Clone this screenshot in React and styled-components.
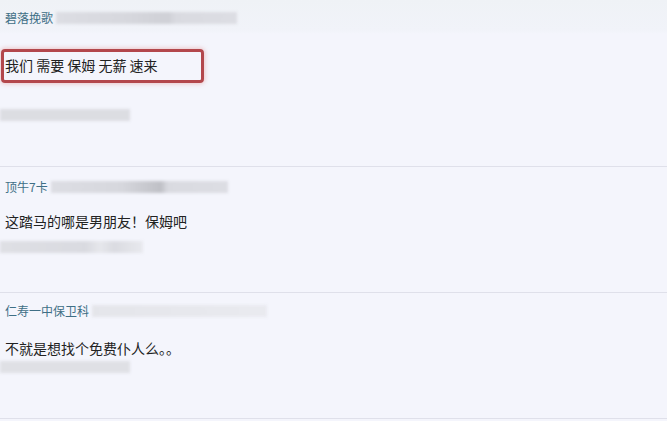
import React from 'react'
import styled, { createGlobalStyle } from 'styled-components'

const Global = createGlobalStyle`
  html, body { margin: 0; padding: 0; }
  body {
    width: 667px;
    height: 421px;
    overflow: hidden;
    background: #f4f5fc;
    font-family: "Noto Sans CJK SC", "Noto Sans", sans-serif;
  }
`

const Page = styled.div`
  width: 667px;
  height: 421px;
  background: linear-gradient(#eff2f6 0, #f1f3f9 30px, #f4f5fc 34px);
  display: flex;
  flex-direction: column;
`

const Comment = styled.div`
  height: ${p => p.$h}px;
  border-bottom: 1px solid #dfe0ea;
  display: flex;
  flex-direction: column;
  align-items: flex-start;
  padding-top: ${p => p.$top}px;
  box-sizing: border-box;
`

const NameRow = styled.div`
  display: flex;
  align-items: center;
  gap: 3px;
  padding-left: 5px;
  height: 14px;
`

const Name = styled.span`
  font-size: 12px;
  line-height: 14px;
  color: #3f6f86;
`

const Blur = styled.div`
  width: ${p => p.$w}px;
  height: 12px;
  background: ${p => p.$bg};
  filter: blur(1.5px);
  margin-top: ${p => p.$mt || 0}px;
`

const Text = styled.div`
  font-size: 14px;
  line-height: 20px;
  color: #222;
  padding-left: 5px;
  margin-top: ${p => p.$mt}px;
`

const Marked = styled.div`
  margin-top: ${p => p.$mt}px;
  margin-left: 1px;
  width: 203px;
  height: 34px;
  box-sizing: border-box;
  border: 3px solid #b3474c;
  border-radius: 4px;
  box-shadow: 0 0 4px 1px rgba(230, 150, 150, 0.5);
  display: flex;
  align-items: center;
  padding: 0 0 3px 1px;
  font-size: 14px;
  color: #222;
`

const nameBar = (dark) =>
  `linear-gradient(90deg, #dcdde3 0%, #d6d7dd 40%, ${dark} 62%, #d9dae0 66%, #dcdde3 100%)`

export default function App() {
  return (
    <>
      <Global />
      <Page>
        <Comment $h={167} $top={11}>
          <NameRow>
            <Name>碧落挽歌</Name>
            <Blur $w={181} $bg={nameBar('#cfd0d6')} />
          </NameRow>
          <Marked $mt={24}>我们 需要 保姆 无薪 速来</Marked>
          <Blur $w={130} $mt={26} $bg="#dcdde2" />
        </Comment>
        <Comment $h={126} $top={13}>
          <NameRow>
            <Name>顶牛7卡</Name>
            <Blur $w={177} $bg={nameBar('#bfc0c6')} />
          </NameRow>
          <Text $mt={17}>这踏马的哪是男朋友！保姆吧</Text>
          <Blur $w={143} $mt={10} $bg="linear-gradient(90deg,#dedfe4 0%,#d9dae0 60%,#e6e7ec 70%,#dadbe1 80%,#e8e9ee 100%)" />
        </Comment>
        <Comment $h={126} $top={11}>
          <NameRow>
            <Name>仁寿一中保卫科</Name>
            <Blur $w={175} $bg="linear-gradient(90deg,#e4e5ea,#e9eaef)" />
          </NameRow>
          <Text $mt={20}>不就是想找个免费仆人么。。</Text>
          <Blur $w={130} $mt={3} $bg="#dfe0e5" />
        </Comment>
      </Page>
    </>
  )
}
